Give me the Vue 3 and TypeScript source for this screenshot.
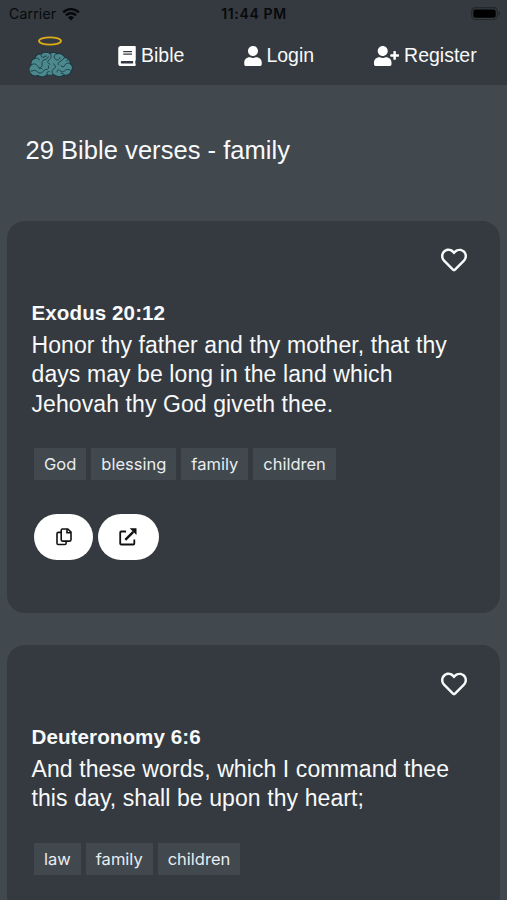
<script setup lang="ts">
interface Verse {
  reference: string
  lines: string[]
  tags: string[]
}

const verses: Verse[] = [
  {
    reference: 'Exodus 20:12',
    lines: [
      'Honor thy father and thy mother, that thy',
      'days may be long in the land which',
      'Jehovah thy God giveth thee.',
    ],
    tags: ['God', 'blessing', 'family', 'children'],
  },
  {
    reference: 'Deuteronomy 6:6',
    lines: ['And these words, which I command thee', 'this day, shall be upon thy heart;'],
    tags: ['law', 'family', 'children'],
  },
]
</script>

<template>
  <div class="screen">
    <header>
      <div class="status">
        <div class="carrier">
          <span>Carrier</span>
          <svg class="wifi" viewBox="0 0 18 14">
            <path d="M1.2 5.4a11 11 0 0 1 15.6 0" />
            <path d="M3.9 8.3a7.2 7.2 0 0 1 10.2 0" />
            <path class="dot" d="M9 13.6 6 10.5a4.3 4.3 0 0 1 6 0z" />
          </svg>
        </div>
        <span class="time">11:44 PM</span>
        <svg class="battery" viewBox="0 0 30 14">
          <rect class="shell" x=".7" y=".7" width="25.6" height="11.8" rx="3.6" />
          <rect x="2.3" y="2.4" width="22.4" height="8.4" rx="2" />
          <path class="cap" d="M27.6 4.6v4c2-.8 2-3.2 0-4z" />
        </svg>
      </div>
      <nav>
        <svg class="logo" viewBox="0 0 44 42">
          <ellipse class="halo" cx="21" cy="5" rx="11" ry="3.6" />
          <g transform="translate(-1.4 -1.600) scale(1.050)">
            <path
              class="brain"
              d="M21.6 18.3c-3-2.2-7.4-1.6-8.6.3-3.1-.3-5.5 1.3-6 4-3 1.400-4.300 3.700-3.600 6.300-2.900 2.300-2.600 6.500-.6 8.300 1.600 2.200 4.400 2.800 6.800 2 3.200 1.900 6.900 1.500 9-.8 2 .8 4.400.6 5.900-.3 3.200 2.500 7.400 2.500 10.200.6 3.400.5 6.100-1 6.800-3.700 1.900-2.600 1.500-5.400-.8-7 0-3.500-2.200-5.700-5.200-6-1.600-2.900-4.600-4.200-7.200-3.500-2-1.800-4.900-1.800-6.700-.2z"
            />
            <path
              class="folds"
              d="M13 18.800c-.8 2 .4 3.200 2.400 3.200M7 23c1.400-1 3.700-.5 4.200 1.300M3.500 29c2-1.500 5-1.200 6 1.200s4 1.600 4.300-.7-1-3.700 1.200-4.800 4-1 4.700-3.200M21.600 18.500c1.400 2.200.8 4.300-1.200 5.800-1.900 1.300-1.400 3.500.8 4M3 35c1.900.3 2.800-1.300 4.700-.6s2 2.700 4.600 2.500 2.500-3.400 5-3.400 3.300-1.500 2.500-3.600M18.600 38c-.9-1.300.1-2.700 1.900-2.600M24.400 38c-1.900-2-1.300-4.400.8-5.300s1.500-3.500-.4-4.600M28 18.500c-3 .6-3.500 3.600-1.500 5.200s3.700.2 4.300-1.700M35.400 22c-1.700.4-1.600 2.500-3.500 3.200s-3 1.600-2.800 3.700M40.600 28c-1.700-1.400-4.200-.7-4.900 1.200s-2.900 2.200-4 .8M41.400 35c-1.700-2-4.300-2.300-5.700-.6s-3.600 1.700-4.800.1-3.400-.5-2.900 1.300M34.600 38.700c-.2-1.500-1.400-2-2.700-1.700M14 33c-.8-1.100-2.200-1.200-3-.2M15.800 20.900l2-.2M37 25.200l1.200-.9"
            />
          </g>
        </svg>
        <a class="bible">
          <svg class="icon" viewBox="0 0 448 512">
            <path
              d="M448 360V24c0-13.300-10.700-24-24-24H60C27 0 0 27 0 60v392c0 33 27 60 60 60h364c13.300 0 24-10.700 24-24v-16c0-7.500-3.500-14.300-8.900-18.700-4.200-15.400-4.200-59.300 0-74.700 5.400-4.300 8.900-11.100 8.900-18.600zM128 134c0-3.300 2.700-6 6-6h212c3.300 0 6 2.700 6 6v20c0 3.300-2.700 6-6 6H134c-3.300 0-6-2.700-6-6v-20zm0 64c0-3.300 2.700-6 6-6h212c3.300 0 6 2.700 6 6v20c0 3.300-2.700 6-6 6H134c-3.300 0-6-2.700-6-6v-20zm253.400 250H96c-17.700 0-32-14.300-32-32 0-17.600 14.400-32 32-32h285.400c-1.900 17.100-1.900 46.900 0 64z"
            />
          </svg>
          <span>Bible</span>
        </a>
        <a class="login">
          <svg class="icon" viewBox="0 0 448 512">
            <path
              d="M224 256c70.700 0 128-57.300 128-128S294.700 0 224 0 96 57.300 96 128s57.300 128 128 128zm89.600 32h-16.700c-22.200 10.200-46.900 16-72.900 16s-50.600-5.800-72.900-16h-16.700C60.200 288 0 348.200 0 422.400V464c0 26.500 21.500 48 48 48h352c26.500 0 48-21.500 48-48v-41.600c0-74.200-60.200-134.400-134.400-134.400z"
            />
          </svg>
          <span>Login</span>
        </a>
        <a class="register">
          <svg class="icon wide" viewBox="0 0 640 512">
            <path
              d="M624 208h-64v-64c0-8.800-7.200-16-16-16h-32c-8.800 0-16 7.200-16 16v64h-64c-8.800 0-16 7.200-16 16v32c0 8.800 7.200 16 16 16h64v64c0 8.800 7.200 16 16 16h32c8.800 0 16-7.200 16-16v-64h64c8.800 0 16-7.200 16-16v-32c0-8.800-7.200-16-16-16zm-400 48c70.700 0 128-57.300 128-128S294.700 0 224 0 96 57.300 96 128s57.300 128 128 128zm89.600 32h-16.700c-22.200 10.200-46.900 16-72.900 16s-50.600-5.800-72.900-16h-16.700C60.200 288 0 348.200 0 422.400V464c0 26.500 21.500 48 48 48h352c26.500 0 48-21.500 48-48v-41.600c0-74.200-60.200-134.400-134.400-134.400z"
            />
          </svg>
          <span>Register</span>
        </a>
      </nav>
    </header>

    <main>
      <h1>29 Bible verses - family</h1>
      <article v-for="verse in verses" :key="verse.reference" class="card">
        <div class="favorite">
          <svg viewBox="0 0 512 512">
            <path
              d="M458.400 64.300C400.600 15.700 311.300 23 256 79.300 200.700 23 111.400 15.600 53.600 64.300-21.600 127.600-10.600 230.800 43 285.500l175.400 178.700c10 10.200 23.400 15.900 37.600 15.900 14.300 0 27.600-5.600 37.600-15.800L469 285.600c53.500-54.700 64.700-157.900-10.600-221.300zm-23.600 187.500L259.400 430.500c-2.400 2.400-4.400 2.400-6.800 0L77.200 251.800c-36.500-37.200-43.900-107.600 7.300-150.700 38.900-32.700 98.900-27.800 136.500 10.500l35 35.700 35-35.700c37.800-38.500 97.800-43.200 136.500-10.600 51.100 43.100 43.500 113.900 7.300 150.800z"
            />
          </svg>
        </div>
        <h2>{{ verse.reference }}</h2>
        <p>
          <span v-for="line in verse.lines" :key="line">{{ line }}</span>
        </p>
        <div class="tags">
          <span v-for="tag in verse.tags" :key="tag" class="tag">{{ tag }}</span>
        </div>
        <div class="actions">
          <button class="copy" aria-label="Copy">
            <svg viewBox="0 0 18 20">
              <path d="M7.500 2h5.300L16 5.200v7.600c0 .8-.5 1.300-1.300 1.300H7.500c-.8 0-1.300-.5-1.300-1.300V3.300C6.200 2.500 6.700 2 7.500 2z" />
              <path d="M12 2.200v3.600h3.800" />
              <path d="M6 5.400H3.300C2.500 5.400 2 5.900 2 6.700v9.500c0 .8.5 1.300 1.300 1.300h6.500c.8 0 1.300-.5 1.300-1.300v-2" />
            </svg>
          </button>
          <button class="open" aria-label="Open">
            <svg viewBox="0 0 20 20">
              <path d="M8 4.500H3.300c-.7 0-1.100.4-1.100 1.100v10.800c0 .7.400 1.100 1.100 1.100h11.900c.7 0 1.100-.4 1.100-1.100v-4" />
              <path class="arrow" d="m7.300 12.800 8-8" />
              <path class="head" d="M11.700 1.200h6.800V8z" />
            </svg>
          </button>
        </div>
      </article>
    </main>
  </div>
</template>

<style>
body {
  margin: 0;
  background: #41484e;
}
</style>

<style scoped>
.screen {
  height: 900px;
  overflow: hidden;
  background: #41484e;
  color: #f8f9fa;
  font-family: 'Liberation Sans', Arial, sans-serif;
}
header {
  height: 85px;
  background: #343a40;
}
.status {
  display: grid;
  grid-template-columns: 1fr auto 1fr;
  align-items: center;
  height: 27px;
  padding: 0 6px 0 9px;
  color: #08090a;
  font: 14px/27px Inter, sans-serif;
}
.carrier {
  display: flex;
  align-items: center;
  gap: 6px;
  letter-spacing: 0.2px;
}
.wifi {
  width: 18px;
  height: 14px;
  fill: none;
  stroke: #08090a;
  stroke-width: 2.4;
}
.wifi .dot {
  fill: #08090a;
  stroke: none;
}
.time {
  margin-right: 2px;
  font-weight: 600;
  letter-spacing: 0.65px;
}
.battery {
  justify-self: end;
  width: 30px;
  height: 14px;
  fill: #000;
}
.battery .shell {
  fill: none;
  stroke: #22272a;
  stroke-width: 1.2;
}
.battery .cap {
  fill: #22272a;
}
nav {
  display: flex;
  align-items: center;
  height: 57px;
  padding-left: 29px;
}
.logo {
  width: 44px;
  height: 42px;
  margin-top: 2px;
}
.halo {
  fill: none;
  stroke: #dfac18;
  stroke-width: 1.8;
}
.brain {
  fill: #4c898e;
  stroke: #1e343d;
  stroke-width: 1;
}
.folds {
  fill: none;
  stroke: #1e3d47;
  stroke-width: 0.9;
  stroke-linecap: round;
}
nav a {
  display: flex;
  align-items: center;
  gap: 5px;
  font-size: 19.5px;
}
.icon {
  width: 18px;
  height: 20px;
  fill: #fff;
}
.icon.wide {
  width: 25px;
}
.bible {
  margin-left: 45px;
}
.login {
  margin-left: 59.5px;
}
nav .login {
  gap: 4.5px;
}
nav .register {
  gap: 5.5px;
}
.register {
  margin-left: 59.5px;
}
h1 {
  margin: 0;
  padding: 50px 25.5px 56px;
  font-size: 25.5px;
  font-weight: 400;
  line-height: 30px;
  letter-spacing: 0.04px;
}
.card {
  box-sizing: border-box;
  height: 392px;
  margin: 0 7px 32px;
  padding: 26px 24px 0;
  border-radius: 18px;
  background: #343a40;
}
.favorite {
  display: flex;
  justify-content: flex-end;
  height: 26px;
  padding-right: 9px;
}
.favorite svg {
  width: 26px;
  height: 26px;
  fill: #f8f9fa;
}
h2 {
  margin: 26px 0 5px;
  padding-left: 0.5px;
  font-size: 20.6px;
  font-weight: 700;
  line-height: 27px;
  letter-spacing: 0.07px;
}
p {
  display: flex;
  flex-direction: column;
  margin: 0 0 29px;
  padding-left: 0.5px;
  font-size: 23px;
  line-height: 29.4px;
  letter-spacing: 0.09px;
  white-space: nowrap;
}
.tags {
  display: flex;
  gap: 5px;
  padding-left: 3px;
}
.tag {
  padding: 0 10px;
  background: #41484e;
  color: #e9ecef;
  font: 16.5px/32px Inter, sans-serif;
}
.actions {
  display: flex;
  gap: 5px;
  margin-top: 34px;
  padding-left: 3px;
}
button {
  display: flex;
  align-items: center;
  justify-content: center;
  width: 59px;
  height: 46px;
  padding: 0;
  border: 0;
  border-radius: 24px;
  background: #fff;
}
.open {
  width: 61px;
}
button svg {
  width: 18px;
  height: 20px;
  fill: none;
  stroke: #111;
  stroke-width: 1.6;
}
.open svg {
  width: 20px;
  margin-right: 2px;
  stroke-width: 1.8;
}
.open .arrow {
  stroke-width: 2.4;
}
.open .head {
  fill: #111;
  stroke: none;
}
</style>
